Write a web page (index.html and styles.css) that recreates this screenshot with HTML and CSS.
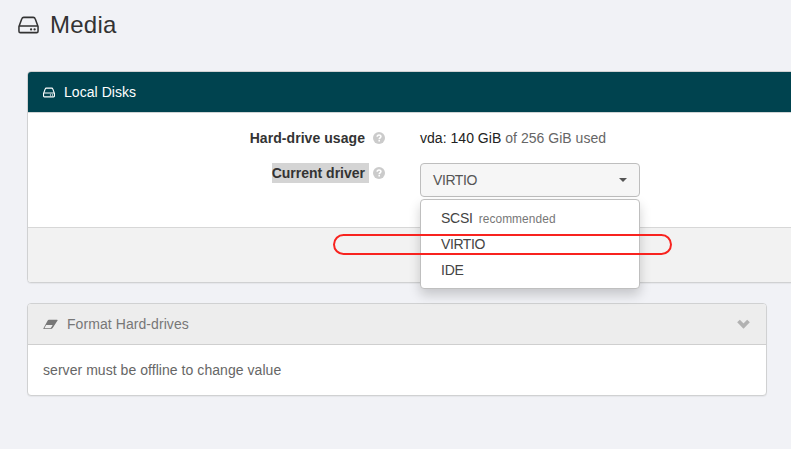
FILE: index.html
```html
<!DOCTYPE html>
<html lang="en">
<head>
<meta charset="utf-8">
<title>Media</title>
<link rel="stylesheet" href="styles.css">
</head>
<body>
<svg class="defs" aria-hidden="true">
  <symbol id="drive" viewBox="0 0 22 18">
    <path d="M1 10.500 4 2.500Q4.500 1 6 1H16Q17.500 1 18 2.500L21 10.500V15.500Q21 17 19.500 17H2.500Q1 17 1 15.500ZM1 10H21" fill="none" stroke="currentColor" stroke-linejoin="round"/>
    <circle cx="13.700" cy="13.600" r="1.200" fill="currentColor"/>
    <circle cx="17.400" cy="13.600" r="1.200" fill="currentColor"/>
  </symbol>
  <symbol id="help" viewBox="0 0 12 12">
    <circle cx="6" cy="6" r="6" fill="#cbcbcb"/>
    <path d="M4.200 4.700C4.200 2.400 7.900 2.500 7.900 4.500C7.900 5.800 6.200 5.800 6.200 7.200" fill="none" stroke="#fff" stroke-width="1.600"/>
    <path d="M5.400 8h1.600v1.600H5.400z" fill="#fff"/>
  </symbol>
</svg>
<h1 class="title"><svg class="title-icon"><use href="#drive"/></svg><span>Media</span></h1>
<section class="panel disks">
  <header class="disks-head"><svg class="head-icon"><use href="#drive"/></svg><span>Local Disks</span></header>
  <div class="disks-body">
    <div class="row">
      <div class="label"><b class="usage">Hard-drive usage</b><svg class="help"><use href="#help"/></svg></div>
      <div class="value"><span class="strong">vda: 140 GiB</span> of 256 GiB used</div>
    </div>
    <div class="row driver">
      <div class="label"><b class="selected">Current driver</b><svg class="help"><use href="#help"/></svg></div>
      <div class="select">
        <div class="select-box"><span class="virtio">VIRTIO</span><i class="caret"></i></div>
        <ul class="menu">
          <li><span class="scsi">SCSI</span><small>recommended</small></li>
          <li><span class="virtio">VIRTIO</span></li>
          <li><span class="scsi">IDE</span></li>
        </ul>
        <div class="highlight"></div>
      </div>
    </div>
  </div>
  <footer class="disks-foot"></footer>
</section>
<section class="panel format">
  <header class="format-head">
    <svg class="eraser" viewBox="0 0 16 11"><path d="M6.200 .3H14.900Q16 .3 15.500 1.200L10.500 9Q9.600 10.300 8.200 10.300H1Q0 10.300 .5 9.400L5 1.200Q5.500 .3 6.200 .3ZM3.300 6 1.500 9.400H8.200L10.300 6Z" fill="currentColor" fill-rule="evenodd"/></svg>
    <span>Format Hard-drives</span>
    <svg class="chevron" viewBox="0 0 13 10"><path d="M1.500 2 6.500 7 11.500 2" fill="none" stroke="#b2b2b2" stroke-width="3.800"/></svg>
  </header>
  <div class="format-body"><span>server must be offline to change value</span></div>
</section>
</body>
</html>
```
FILE: styles.css
```css
* { box-sizing: border-box; }
body {
  margin: 0;
  height: 449px;
  overflow: hidden;
  background: #f1f2f6;
  color: #333;
  font: 14px/20px "Liberation Sans", Arial, sans-serif;
}
.defs { position: absolute; width: 0; height: 0; }
svg { flex: none; display: block; }
.title {
  display: flex;
  align-items: center;
  height: 50px;
  margin: 0 0 21px;
  padding-left: 18px;
  gap: 11px;
  font-size: 24px;
  font-weight: 400;
  line-height: 30px;
  letter-spacing: .25px;
}
.title-icon { width: 21px; height: 18px; stroke-width: 1.6; }
.panel {
  margin-left: 27px;
  border: 1px solid #d0d1d2;
  border-radius: 4px;
  background: #fff;
  box-shadow: 0 1px 1px rgba(0, 0, 0, .05);
}
.disks { width: 780px; height: 212px; }
.disks-head {
  display: flex;
  align-items: center;
  height: 41px;
  padding-left: 15px;
  gap: 9px;
  border-bottom: 1px solid #d0d4d5;
  border-radius: 3px 3px 0 0;
  background: #00434f;
  color: #fff;
}
.disks-head span { letter-spacing: .05px; }
.head-icon { width: 12px; height: 11px; stroke-width: 2; }
.disks-body { height: 114px; padding-top: 15px; }
.row { display: flex; height: 35px; }
.label {
  display: flex;
  width: 357px;
  margin-right: 35px;
  justify-content: flex-end;
  gap: 4px;
  align-items: flex-start;
}
.label b { height: 20px; padding-right: 4px; }
.label .usage { letter-spacing: .06px; }
.selected { background: #d4d4d4; }
.help { width: 12px; height: 12px; margin-top: 4px; }
.value { color: #666; letter-spacing: .03px; }
.strong { color: #222; }
.select { position: relative; width: 220px; }
.select-box {
  display: flex;
  align-items: center;
  justify-content: space-between;
  height: 34px;
  padding: 0 12px;
  border: 1px solid #bebebe;
  border-radius: 4px;
  background: #f6f6f6;
  color: #555;
}
.virtio { letter-spacing: -.42px; }
.scsi { letter-spacing: -.25px; }
.caret { border: 5px solid transparent; border-top: 4px solid #555; border-bottom: 0; border-left-width: 4px; border-right-width: 4px; }
.menu {
  position: absolute;
  top: 36px;
  left: 0;
  width: 220px;
  height: 90px;
  margin: 0;
  padding: 5px 0;
  list-style: none;
  border: 1px solid #bfbfbf;
  border-radius: 4px;
  background: #fff;
  box-shadow: 0 6px 12px rgba(0, 0, 0, .18);
  color: #444;
}
.menu li { display: flex; height: 26px; padding: 3px 20px; align-items: baseline; }
.menu small { margin-left: 6px; font-size: 11.9px; letter-spacing: .08px; color: #777; }
.highlight {
  position: absolute;
  top: 71px;
  left: -87px;
  width: 339px;
  height: 21px;
  border: 2px solid #f8231f;
  border-radius: 10.5px;
}
.disks-foot { height: 55px; border-top: 1px solid #d7d7d7; background: #f2f2f2; border-radius: 0 0 3px 3px; }
.format { width: 740px; height: 93px; margin-top: 20px; }
.format-head {
  display: flex;
  align-items: center;
  height: 41px;
  padding: 0 16px 0 15px;
  border-bottom: 1px solid #cfcfcf;
  border-radius: 3px 3px 0 0;
  background: #ededed;
  color: #777;
}
.format-head span { letter-spacing: .07px; }
.eraser { width: 15px; height: 11px; margin-right: 9px; }
.chevron { width: 13px; height: 10px; margin-left: auto; }
.format-body { padding: 15px; color: #666; letter-spacing: .05px; }
```
